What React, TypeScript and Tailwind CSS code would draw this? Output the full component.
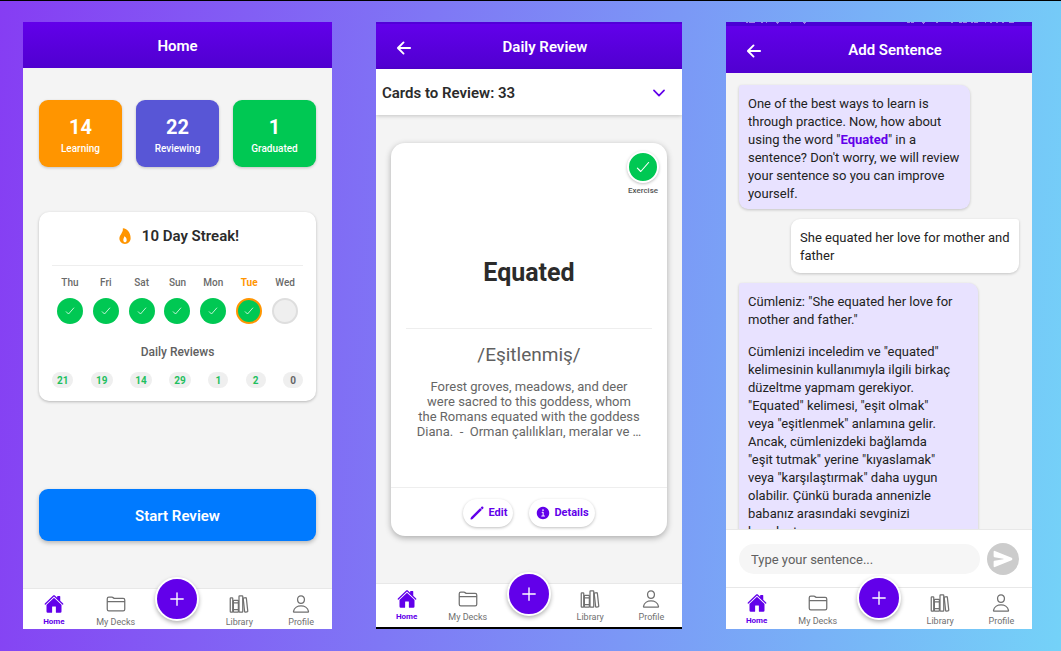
import type { ReactNode } from "react";
import {
  IoAdd,
  IoArrowBack,
  IoCheckmark,
  IoChevronDown,
  IoFlame,
  IoFolderOutline,
  IoHome,
  IoInformationCircle,
  IoLibraryOutline,
  IoPencil,
  IoPersonOutline,
  IoSend,
} from "react-icons/io5";

const stats = [
  { value: 14, label: "Learning", color: "bg-[#ff9500]" },
  { value: 22, label: "Reviewing", color: "bg-[#5856d6]" },
  { value: 1, label: "Graduated", color: "bg-[#00c853]" },
];

const week = [
  { day: "Thu", state: "done", reviews: 21 },
  { day: "Fri", state: "done", reviews: 19 },
  { day: "Sat", state: "done", reviews: 14 },
  { day: "Sun", state: "done", reviews: 29 },
  { day: "Mon", state: "done", reviews: 1 },
  { day: "Tue", state: "today", reviews: 2 },
  { day: "Wed", state: "empty", reviews: 0 },
];

const circleStyles: Record<string, string> = {
  done: "bg-[#00c853]",
  today: "border-2 border-[#ff9500] bg-[#00c853]",
  empty: "border-2 border-[#dedede] bg-[#efefef]",
};

function Phone({ children }: { children: ReactNode }) {
  return <section className="flex min-h-0 min-w-0 flex-col overflow-hidden bg-[#f4f4f4]">{children}</section>;
}

function Header({ title, back, height }: { title: string; back?: boolean; height: string }) {
  return (
    <header
      className={`flex shrink-0 items-center bg-linear-to-b from-[#6200ea] to-[#5000d0] pt-[2px] text-white ${height} ${
        back ? "pr-2 pl-[18px]" : ""
      }`}
    >
      {back && (
        <button aria-label="Back" className="mr-[2px]">
          <IoArrowBack className="size-5" />
        </button>
      )}
      <h1 className="flex-1 text-center text-[15px] font-semibold">{title}</h1>
    </header>
  );
}

/* Lower edge of the system status icons, scrolled almost out of view. */
function StatusStrip() {
  return (
    <svg
      aria-hidden="true"
      viewBox="0 0 306 4"
      preserveAspectRatio="none"
      className="block h-1 w-full shrink-0 bg-[#4a00d4]"
      fill="#a080ea"
    >
      <path d="M20 0h2v1h-2zM23 0h6v1h-6zM35 0h2v1h-2zM40 0h1v1h-1zM50 0h3v1h-1v1h-1v-1h-1zM64 0h1v1h-1zM77 0h3v1h-1v1h-1v-1h-1z" />
      <path d="M181 0h3v1h-3zM185 0h3v1h-3zM196 0h3v1h-1v1h-1v-1h-1zM210 0h2v1h-2zM225 0h2v1h-2zM233 0h3v1h-3zM237 0h4v1h-4zM245 0h2v1h-2zM248 0h4v1h-4zM259 0h1v1h-1zM264 0h2v1h-2zM270 0h2v1h-2zM276 0h2v1h-2zM283 0h5v1h-5z" />
    </svg>
  );
}

function NavItem({ icon, label, active }: { icon: ReactNode; label: string; active?: boolean }) {
  return (
    <a
      href="#"
      className={`flex flex-col items-center gap-[3px] leading-[10px] ${
        active ? "text-[8px] font-bold text-[#6200ea]" : "text-[9px] text-[#707070]"
      }`}
    >
      {icon}
      {label}
    </a>
  );
}

function BottomNav({ height }: { height: string }) {
  return (
    <nav className={`grid shrink-0 grid-cols-5 border-t border-[#e8e8e8] bg-white pt-[5px] ${height}`}>
      <NavItem active label="Home" icon={<IoHome className="size-5" />} />
      <NavItem label="My Decks" icon={<IoFolderOutline className="size-5" />} />
      <div className="flex justify-center">
        <button
          aria-label="Add"
          className="-mt-[17px] flex size-11 items-center justify-center rounded-full border-2 border-white bg-[#6200ea] text-white shadow-[0_2px_4px_rgba(0,0,0,0.3)]"
        >
          <IoAdd className="size-[22px]" />
        </button>
      </div>
      <NavItem label="Library" icon={<IoLibraryOutline className="size-5" />} />
      <NavItem label="Profile" icon={<IoPersonOutline className="size-5" />} />
    </nav>
  );
}

function HomeScreen() {
  return (
    <Phone>
      <Header title="Home" height="h-[46px]" />
      <main className="flex flex-1 flex-col px-4 pt-8">
        <div className="grid grid-cols-3 gap-[14px]">
          {stats.map((s) => (
            <div
              key={s.label}
              className={`flex h-[67px] flex-col items-center justify-center rounded-[9px] pt-[6px] text-white shadow-[0_1px_3px_rgba(0,0,0,0.2)] ${s.color}`}
            >
              <span className="text-xl leading-6 font-bold">{s.value}</span>
              <span className="text-[10px] leading-5 font-medium">{s.label}</span>
            </div>
          ))}
        </div>

        <div className="mt-[45px] flex h-[189px] flex-col rounded-[10px] bg-white px-[13px] shadow-[0_1px_3px_rgba(0,0,0,0.25)]">
          <h2 className="flex items-center justify-center gap-2 pt-[14px] text-[15px] leading-5 font-semibold text-[#2b2b2b]">
            <IoFlame className="size-[18px] text-[#ff9500]" />
            10 Day Streak!
          </h2>
          <div className="mt-[19px] grid grid-cols-7 border-t border-[#eeeeee] pt-[10px]">
            {week.map((d) => (
              <div key={d.day} className="flex flex-col items-center gap-2">
                <span
                  className={`text-[10px] leading-[14px] ${
                    d.state === "today" ? "font-bold text-[#ff9500]" : "font-medium text-[#6a6a6a]"
                  }`}
                >
                  {d.day}
                </span>
                <span
                  className={`flex size-[26px] items-center justify-center rounded-full text-white ${circleStyles[d.state]}`}
                >
                  {d.state !== "empty" && <IoCheckmark className="size-3" />}
                </span>
              </div>
            ))}
          </div>
          <h3 className="mt-5 text-center text-xs leading-4 font-medium text-[#606060]">Daily Reviews</h3>
          <div className="mt-3 flex justify-between">
            {week.map((d) => (
              <span
                key={d.day}
                className={`flex h-4 items-center rounded-full bg-[#efefef] text-[10px] font-bold ${
                  d.reviews > 9 ? "px-[5px]" : "px-[7px]"
                } ${d.reviews > 0 ? "text-[#1fbf5f]" : "text-[#666666]"}`}
              >
                {d.reviews}
              </span>
            ))}
          </div>
        </div>

        <button className="mt-[88px] h-[52px] rounded-[9px] bg-[#007aff] pt-[2px] text-[15px] font-semibold text-white shadow-[0_2px_4px_rgba(0,0,0,0.25)]">
          Start Review
        </button>
      </main>
      <BottomNav height="h-[41px]" />
    </Phone>
  );
}

function ReviewScreen() {
  return (
    <Phone>
      <Header title="Daily Review" back height="h-[47px] border-t-2 border-[#5200d8]" />
      <div className="flex h-[46px] shrink-0 items-center justify-between bg-white pt-[2px] pr-[14px] pl-[6px] shadow-[0_1px_4px_rgba(0,0,0,0.2)]">
        <h2 className="text-[15px] font-semibold text-[#2b2b2b]">Cards to Review: 33</h2>
        <button aria-label="Show cards">
          <IoChevronDown className="size-[18px] text-[#6200ea]" />
        </button>
      </div>
      <main className="flex min-h-0 flex-1 flex-col px-[15px] pt-7 pb-[47px]">
        <article className="flex flex-1 flex-col rounded-[14px] bg-white shadow-[0_2px_6px_rgba(0,0,0,0.3)]">
          <div className="flex flex-col items-end pt-2 pr-2">
            <button className="flex flex-col items-center gap-[2px] text-[8px] leading-3 font-medium text-[#555555]">
              <span className="flex size-8 items-center justify-center rounded-full border-2 border-white bg-[#00c853] text-white shadow-[0_1px_3px_rgba(0,0,0,0.25)]">
                <IoCheckmark className="size-[18px]" />
              </span>
              Exercise
            </button>
          </div>
          <p className="mt-[60px] text-center text-[25px] leading-8 font-bold text-[#2b2b2b]">Equated</p>
          <hr className="mx-[15px] mt-[39px] border-[#eeeeee]" />
          <p className="mt-[14px] text-center text-[19px] leading-6 text-[#606060]">/Eşitlenmiş/</p>
          <p className="mx-6 mt-3 text-center text-[13px] leading-[15px] text-[#666666]">
            Forest groves, meadows, and deer
            <br />
            were sacred to this goddess, whom
            <br />
            the Romans equated with the goddess
            <br />
            Diana. &nbsp;-&nbsp; Orman çalılıkları, meralar ve …
          </p>
          <div className="mt-auto flex h-[49px] items-center justify-center gap-4 border-t border-[#eeeeee] pt-px text-[11px] font-bold text-[#6200ea]">
            <button className="flex h-7 items-center gap-[3px] rounded-full bg-white px-[6px] pt-px shadow-[0_1px_3px_rgba(0,0,0,0.25)]">
              <IoPencil className="size-4" />
              Edit
            </button>
            <button className="flex h-7 items-center gap-[3px] rounded-full bg-white px-[6px] pt-px shadow-[0_1px_3px_rgba(0,0,0,0.25)]">
              <IoInformationCircle className="size-4" />
              Details
            </button>
          </div>
        </article>
      </main>
      <BottomNav height="h-11" />
      <div className="h-[2px] shrink-0 bg-black" />
    </Phone>
  );
}

function SentenceScreen() {
  return (
    <Phone>
      <StatusStrip />
      <Header title="Add Sentence" back height="h-[47px]" />
      <main className="flex min-h-0 flex-1 flex-col items-start gap-[10px] overflow-hidden px-[13px] pt-3 text-[13px] leading-[18px] text-[#222222]">
        <p className="w-[231px] max-w-full rounded-[9px] rounded-tl-[3px] bg-[#e8e2ff] px-[9px] pt-[10px] pb-[6px] shadow-[0_1px_3px_rgba(0,0,0,0.2)]">
          One of the best ways to learn is
          <br />
          through practice. Now, how about
          <br />
          using the word "<strong className="font-bold text-[#6200ea]">Equated</strong>" in a
          <br />
          sentence? Don't worry, we will review
          <br />
          your sentence so you can improve
          <br />
          yourself.
        </p>
        <p className="w-[228px] max-w-full self-end rounded-[9px] rounded-tr-[3px] bg-white px-[9px] pt-[10px] pb-2 shadow-[0_1px_3px_rgba(0,0,0,0.2)]">
          She equated her love for mother and father
        </p>
        <div className="flex w-[239px] max-w-full flex-col gap-[14px] rounded-[9px] rounded-tl-[3px] bg-[#e8e2ff] px-[9px] pt-[10px] pb-2 shadow-[0_1px_3px_rgba(0,0,0,0.2)]">
          <p>
            Cümleniz: "She equated her love for
            <br />
            mother and father."
          </p>
          <p>
            Cümlenizi inceledim ve "equated"
            <br />
            kelimesinin kullanımıyla ilgili birkaç
            <br />
            düzeltme yapmam gerekiyor.
            <br />
            "Equated" kelimesi, "eşit olmak"
            <br />
            veya "eşitlenmek" anlamına gelir.
            <br />
            Ancak, cümlenizdeki bağlamda
            <br />
            "eşit tutmak" yerine "kıyaslamak"
            <br />
            veya "karşılaştırmak" daha uygun
            <br />
            olabilir. Çünkü burada annenizle
            <br />
            babanız arasındaki sevginizi
            <br />
            karşılaştırıyorsunuz.
          </p>
        </div>
      </main>
      <form className="flex h-[58px] shrink-0 items-center gap-[7px] border-t border-[#e8e8e8] bg-white px-[13px]">
        <input
          aria-label="Your sentence"
          placeholder="Type your sentence..."
          className="h-[30px] min-w-0 flex-1 rounded-full bg-[#f6f6f6] px-3 pt-[2px] text-[13px] text-[#222222] outline-none placeholder:text-[#606060]"
        />
        <button
          type="button"
          aria-label="Send"
          className="flex size-8 items-center justify-center rounded-full bg-[#cccccc] text-white"
        >
          <IoSend className="size-5" />
        </button>
      </form>
      <BottomNav height="h-[42px]" />
    </Phone>
  );
}

export default function App() {
  return (
    <div className="grid h-screen min-h-[600px] grid-cols-[309fr_306fr_306fr] grid-rows-[minmax(0,1fr)] gap-11 border-t border-black bg-linear-[95deg] from-[#863df3] to-[#74d2f8] pt-[21px] pr-[29px] pb-[22px] pl-[23px] font-['Roboto',sans-serif]">
      <HomeScreen />
      <ReviewScreen />
      <SentenceScreen />
    </div>
  );
}
